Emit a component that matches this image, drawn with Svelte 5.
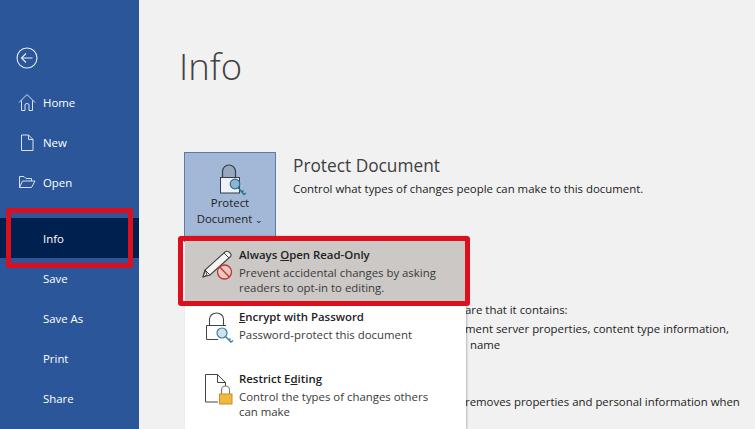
<script>
  const upper = [
    { label: 'Home', icon: 'home' },
    { label: 'New', icon: 'new' },
    { label: 'Open', icon: 'open' }
  ];
  const lower = ['Info', 'Save', 'Save As', 'Print', 'Share'];
</script>

{#snippet navIcon(name)}
  <svg class="nav-icon" viewBox="0 0 19 19" fill="none" stroke="#d5e2f5" stroke-width="1">
    {#if name === 'home'}
      <path d="M1 9.500 L9 1.500 L17 9.500 M3.500 7.500 V17.500 H7 V12 Q7 10.500 9 10.500 Q11 10.500 11 12 V17.500 H14.500 V7.500" />
    {:else if name === 'new'}
      <path d="M3.500 2 H10.500 L15 6.500 V17.500 H3.500 Z M10.500 2 V6.500 H15" />
    {:else}
      <path d="M1.500 14.500 V3.500 H6 L8 5.500 H13.500 V8 M1.500 14.500 L4.500 8 H17 L13.500 14.500 Z" />
    {/if}
  </svg>
{/snippet}

<div class="page">
  <aside class="sidebar">
    <div class="back">
      <svg viewBox="0 0 22 22" width="22" height="22" fill="none" stroke="#e8eef8" stroke-width="1.100">
        <circle cx="11" cy="11" r="10" />
        <path d="M5.500 11 H16.500 M10 6.500 L5.500 11 L10 15.500" />
      </svg>
    </div>
    <nav class="group">
      {#each upper as item}
        <div class="nav-item">
          {@render navIcon(item.icon)}
          <span>{item.label}</span>
        </div>
      {/each}
    </nav>
    <nav class="group lower">
      {#each lower as label, i}
        <div class="nav-item" class:active={i === 0}>
          <span class="nav-blank"></span>
          <span>{label}</span>
        </div>
      {/each}
    </nav>
  </aside>

  <main class="content">
    <h1>Info</h1>
    <section class="protect">
      <div class="protect-btn">
        <svg class="lock" viewBox="0 0 34 34" width="34" height="34" fill="none">
          <path d="M9.500 14.500 V8.500 A6.500 6.500 0 0 1 22.500 8.500 V14.500 Z" fill="#98a7bd" stroke="#333d4c" stroke-width="1.200" />
          <rect x="7.500" y="14.500" width="19" height="15.500" fill="#eef1f6" stroke="#333d4c" />
          <circle cx="22" cy="21" r="4.800" fill="#8fb4cf" stroke="#2f6f95" stroke-width="1.200" />
          <path d="M25 24.500 L31 31.500 L33 30 M29 29 L30.500 27.500" stroke="#2f6f95" stroke-width="1.500" />
        </svg>
        <span>Protect</span>
        <span>Document <i class="caret">⌄</i></span>
      </div>
      <div class="protect-text">
        <h2>Protect Document</h2>
        <p>Control what types of changes people can make to this document.</p>
      </div>
    </section>
    <div class="behind">
      <p class="b1">are that it contains:</p>
      <p class="b2">ment server properties, content type information,</p>
      <p class="b3">name</p>
      <p class="b4">removes properties and personal information when</p>
    </div>
  </main>

  <div class="menu">
    <div class="menu-item selected">
      <svg class="menu-icon" viewBox="0 0 36 36" width="36" height="36" fill="none">
        <path d="M2 30 L4 23 L24 5 Q26 3.500 28 5 L29.500 6.500 Q31 8.500 29 10 L9 28 Z" fill="#f7f5f3" stroke="#444" stroke-width="1.100" />
        <path d="M4 23 L9 28 M2 30 L4 23 L6 28 Z M23 6 L28 11" stroke="#444" />
        <circle cx="23.500" cy="25" r="7" fill="#e9c8c4" stroke="#c0392f" stroke-width="1.300" />
        <path d="M18.700 20 L28.300 30" stroke="#c0392f" stroke-width="1.300" />
      </svg>
      <div>
        <strong>Always <u>O</u>pen Read-Only</strong>
        <p>Prevent accidental changes by asking<br />readers to opt-in to editing.</p>
      </div>
    </div>
    <div class="menu-item second">
      <svg class="menu-icon" viewBox="0 0 36 36" width="36" height="36" fill="none">
        <path d="M8.500 16 V10 A7 6 0 0 1 22.500 10 V16" stroke="#444" stroke-width="1.100" />
        <path d="M17 30.500 H5.500 V16.500 H25" stroke="#444" />
        <circle cx="21" cy="24" r="5" fill="#cfe3ee" stroke="#3b7ea1" stroke-width="1.200" />
        <path d="M24.500 27.500 L30 33 L32 31.500 M28 31 L29.500 29.500" stroke="#3b7ea1" stroke-width="1.400" />
      </svg>
      <div>
        <strong><u>E</u>ncrypt with Password</strong>
        <p>Password-protect this document</p>
      </div>
    </div>
    <div class="menu-item third">
      <svg class="menu-icon" viewBox="0 0 36 36" width="36" height="36" fill="none">
        <path d="M17 31 H4.500 V3.500 H16.500 L24.500 11.500 V15 M16.500 3.500 V11.500 H24.500" fill="#fff" stroke="#444" />
        <path d="M20.500 23 V19 A4 4 0 0 1 28.500 19 V23" stroke="#777" stroke-width="1.100" />
        <rect x="18.500" y="23" width="12.500" height="10" fill="#f0b840" stroke="#c79020" />
      </svg>
      <div>
        <strong>Restrict E<u>d</u>iting</strong>
        <p>Control the types of changes others<br />can make</p>
      </div>
    </div>
  </div>

  <div class="mark mark-info"></div>
  <div class="mark mark-menu"></div>
</div>

<style>
  :global(body) {
    margin: 0;
    background: #f1f1f1;
  }

  .page {
    position: relative;
    display: flex;
    width: 755px;
    height: 429px;
    overflow: hidden;
    background: #f1f1f1;
    color: #222;
    font-family: "Open Sans", "Noto Sans", sans-serif;
    font-size: 11.400px;
  }

  .sidebar {
    flex: 0 0 139px;
    background: #2b579a;
    color: #fff;
    padding-top: 47px;
    box-sizing: border-box;
  }

  .back {
    height: 35px;
    padding-left: 16px;
  }

  .group {
    display: flex;
    flex-direction: column;
  }

  .lower {
    margin-top: 16px;
  }

  .nav-item {
    display: flex;
    align-items: center;
    height: 40px;
    padding-left: 18px;
    gap: 6px;
  }

  .nav-item.active {
    background: #002050;
  }

  .nav-icon, .nav-blank {
    flex: 0 0 19px;
    width: 19px;
    height: 19px;
  }

  .content {
    flex: 1;
    padding-left: 41px;
  }

  h1 {
    margin: 41px 0 0 -1px;
    font-size: 36.500px;
    line-height: 50px;
    font-weight: 300;
    color: #404040;
  }

  .protect {
    display: flex;
    margin: 61px 0 0 4px;
    gap: 17px;
  }

  .protect-btn {
    display: flex;
    flex-direction: column;
    align-items: center;
    box-sizing: border-box;
    width: 92px;
    height: 90px;
    padding-top: 10px;
    background: #a3b8d6;
    border: 1px solid #5b7ba8;
    line-height: 16px;
  }

  .lock {
    margin-bottom: -2px;
  }

  .caret {
    font-style: normal;
    font-size: 9px;
  }

  .protect-text h2 {
    margin: 3px 0 0;
    font-size: 17.300px;
    line-height: 22px;
    font-weight: 400;
    color: #404040;
  }

  .protect-text p {
    margin: 3px 0 0;
    line-height: 18px;
  }

  .behind {
    margin-left: 285px;
    margin-top: 60px;
    white-space: nowrap;
  }

  .behind p {
    margin: 0;
    line-height: 16px;
  }

  .b2 { margin-top: 3px !important; }
  .b3 { margin-top: 0 !important; padding-left: 5px; }
  .b4 { margin-top: 41px !important; }

  .menu {
    position: absolute;
    left: 185px;
    top: 236px;
    width: 281px;
    height: 193px;
    background: #fff;
    box-shadow: 1px 0 2px rgba(0, 0, 0, 0.25);
  }

  .menu-item {
    display: flex;
    box-sizing: border-box;
    padding-left: 16px;
    gap: 2px;
    line-height: 15.500px;
  }

  .menu-icon {
    flex: 0 0 36px;
  }

  .menu-item strong {
    display: block;
    font-weight: 600;
    color: #222;
  }

  .menu-item p {
    margin: 2px 0 0;
    color: #3a3a3a;
  }

  .selected {
    height: 68px;
    padding-top: 11px;
    background: #cbc8c6;
  }

  .second {
    height: 62px;
    padding-top: 5px;
  }

  .third {
    padding-top: 5px;
  }

  .mark {
    position: absolute;
    box-sizing: border-box;
    border: 5px solid #dd0f1c;
    border-radius: 3px;
  }

  .mark-info {
    left: 6px;
    top: 208px;
    width: 127px;
    height: 60px;
  }

  .mark-menu {
    left: 178px;
    top: 236px;
    width: 292px;
    height: 70px;
  }
</style>
